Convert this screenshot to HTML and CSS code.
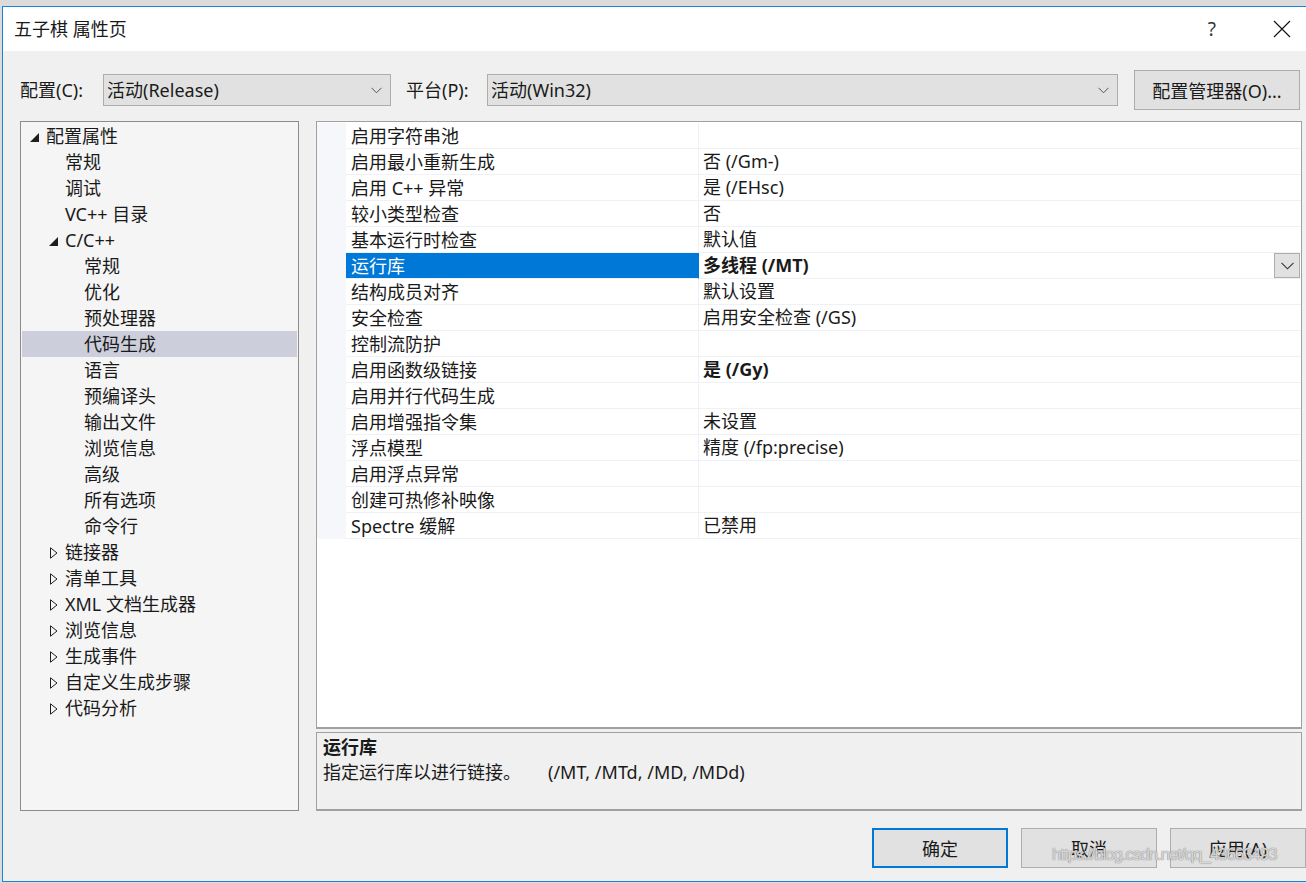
FILE: index.html
```html
<!DOCTYPE html>
<html>
<head>
  <meta charset="utf-8">
  <title>五子棋 属性页</title>
  <link rel="stylesheet" href="styles.css">
</head>
<body>

  <div class="dialog">
    <div class="titlebar">
      <span class="title">五子棋 属性页</span>
      <div class="title-buttons">
        <span class="help">?</span>
        <svg class="close" width="18" height="18" viewBox="0 0 18 18"><path d="M1 1 L17 17 M17 1 L1 17" stroke="#111" stroke-width="1.1" fill="none"/></svg>
      </div>
    </div>

    <div class="content">
      <div class="config-row">
        <span class="label label-config">配置(C):</span>
        <div class="combo combo-config">
          <span>活动(Release)</span>
          <svg width="11" height="7" viewBox="0 0 11 7"><path d="M0.5 0.8 L5.5 5.8 L10.5 0.8" stroke="#555" stroke-width="1" fill="none"/></svg>
        </div>
        <span class="label label-platform">平台(P):</span>
        <div class="combo combo-platform">
          <span>活动(Win32)</span>
          <svg width="11" height="7" viewBox="0 0 11 7"><path d="M0.5 0.8 L5.5 5.8 L10.5 0.8" stroke="#555" stroke-width="1" fill="none"/></svg>
        </div>
        <button class="btn btn-manager">配置管理器(O)...</button>
      </div>

      <div class="main">
        <div class="tree">
          <div class="node lv0"><span class="twisty"><svg width="9" height="9" viewBox="0 0 9 9"><path d="M9 0 L9 9 L0 9 Z" fill="#1e1e1e"/></svg></span>配置属性</div>
          <div class="node lv1"><span class="twisty"></span>常规</div>
          <div class="node lv1"><span class="twisty"></span>调试</div>
          <div class="node lv1"><span class="twisty"></span>VC++ 目录</div>
          <div class="node lv1"><span class="twisty"><svg width="9" height="9" viewBox="0 0 9 9"><path d="M9 0 L9 9 L0 9 Z" fill="#1e1e1e"/></svg></span>C/C++</div>
          <div class="node lv2"><span class="twisty"></span>常规</div>
          <div class="node lv2"><span class="twisty"></span>优化</div>
          <div class="node lv2"><span class="twisty"></span>预处理器</div>
          <div class="node lv2 selected"><span class="twisty"></span>代码生成</div>
          <div class="node lv2"><span class="twisty"></span>语言</div>
          <div class="node lv2"><span class="twisty"></span>预编译头</div>
          <div class="node lv2"><span class="twisty"></span>输出文件</div>
          <div class="node lv2"><span class="twisty"></span>浏览信息</div>
          <div class="node lv2"><span class="twisty"></span>高级</div>
          <div class="node lv2"><span class="twisty"></span>所有选项</div>
          <div class="node lv2"><span class="twisty"></span>命令行</div>
          <div class="node lv1"><span class="twisty closed"><svg width="8" height="12" viewBox="0 0 8 12"><path d="M0.5 0.8 L7 6 L0.5 11.2 Z" fill="none" stroke="#1e1e1e" stroke-width="1"/></svg></span>链接器</div>
          <div class="node lv1"><span class="twisty closed"><svg width="8" height="12" viewBox="0 0 8 12"><path d="M0.5 0.8 L7 6 L0.5 11.2 Z" fill="none" stroke="#1e1e1e" stroke-width="1"/></svg></span>清单工具</div>
          <div class="node lv1"><span class="twisty closed"><svg width="8" height="12" viewBox="0 0 8 12"><path d="M0.5 0.8 L7 6 L0.5 11.2 Z" fill="none" stroke="#1e1e1e" stroke-width="1"/></svg></span>XML 文档生成器</div>
          <div class="node lv1"><span class="twisty closed"><svg width="8" height="12" viewBox="0 0 8 12"><path d="M0.5 0.8 L7 6 L0.5 11.2 Z" fill="none" stroke="#1e1e1e" stroke-width="1"/></svg></span>浏览信息</div>
          <div class="node lv1"><span class="twisty closed"><svg width="8" height="12" viewBox="0 0 8 12"><path d="M0.5 0.8 L7 6 L0.5 11.2 Z" fill="none" stroke="#1e1e1e" stroke-width="1"/></svg></span>生成事件</div>
          <div class="node lv1"><span class="twisty closed"><svg width="8" height="12" viewBox="0 0 8 12"><path d="M0.5 0.8 L7 6 L0.5 11.2 Z" fill="none" stroke="#1e1e1e" stroke-width="1"/></svg></span>自定义生成步骤</div>
          <div class="node lv1"><span class="twisty closed"><svg width="8" height="12" viewBox="0 0 8 12"><path d="M0.5 0.8 L7 6 L0.5 11.2 Z" fill="none" stroke="#1e1e1e" stroke-width="1"/></svg></span>代码分析</div>
        </div>

        <div class="right">
          <div class="grid">
            <div class="row"><div class="gutter"></div><div class="name">启用字符串池</div><div class="value"></div></div>
            <div class="row"><div class="gutter"></div><div class="name">启用最小重新生成</div><div class="value">否 (/Gm-)</div></div>
            <div class="row"><div class="gutter"></div><div class="name">启用 C++ 异常</div><div class="value">是 (/EHsc)</div></div>
            <div class="row"><div class="gutter"></div><div class="name">较小类型检查</div><div class="value">否</div></div>
            <div class="row"><div class="gutter"></div><div class="name">基本运行时检查</div><div class="value">默认值</div></div>
            <div class="row active">
              <div class="gutter"></div>
              <div class="name">运行库</div>
              <div class="value">
                <b>多线程 (/MT)</b>
                <span class="drop">
                  <svg width="13" height="8" viewBox="0 0 13 8"><path d="M0.5 0.8 L6.5 6.8 L12.5 0.8" stroke="#333" stroke-width="1.1" fill="none"/></svg>
                </span>
              </div>
            </div>
            <div class="row"><div class="gutter"></div><div class="name">结构成员对齐</div><div class="value">默认设置</div></div>
            <div class="row"><div class="gutter"></div><div class="name">安全检查</div><div class="value">启用安全检查 (/GS)</div></div>
            <div class="row"><div class="gutter"></div><div class="name">控制流防护</div><div class="value"></div></div>
            <div class="row"><div class="gutter"></div><div class="name">启用函数级链接</div><div class="value"><b>是 (/Gy)</b></div></div>
            <div class="row"><div class="gutter"></div><div class="name">启用并行代码生成</div><div class="value"></div></div>
            <div class="row"><div class="gutter"></div><div class="name">启用增强指令集</div><div class="value">未设置</div></div>
            <div class="row"><div class="gutter"></div><div class="name">浮点模型</div><div class="value">精度 (/fp:precise)</div></div>
            <div class="row"><div class="gutter"></div><div class="name">启用浮点异常</div><div class="value"></div></div>
            <div class="row"><div class="gutter"></div><div class="name">创建可热修补映像</div><div class="value"></div></div>
            <div class="row"><div class="gutter"></div><div class="name">Spectre 缓解</div><div class="value">已禁用</div></div>
          </div>

          <div class="desc">
            <div class="desc-title">运行库</div>
            <div class="desc-text">指定运行库以进行链接。<span class="desc-flags">(/MT, /MTd, /MD, /MDd)</span></div>
          </div>
        </div>
      </div>

      <div class="footer">
        <button class="btn btn-ok">确定</button>
        <button class="btn">取消</button>
        <button class="btn">应用(A)</button>
        <span class="watermark">https://blog.csdn.net/qq_43663493</span>
      </div>
    </div>
  </div>

</body>
</html>
```

FILE: styles.css
```css
body {
  margin: 0;
  background-color: #dcdcdc; /* window behind the dialog */
  font-family: "Noto Sans", "Noto Sans CJK SC", sans-serif;
  font-size: 18px;
  color: #1a1a1a;
  overflow: hidden;
}

.dialog {
  margin: 6px 0 0 2px;
  width: 1306px;
  border: 1px solid #1883d7;
  background-color: #f0f0f0;
}

/* title bar */
.titlebar {
  height: 44px;
  background-color: #fff;
  display: flex;
  align-items: center;
  justify-content: space-between;
  padding-left: 11px;
}

.title {
  line-height: 26px;
}

.title-buttons {
  display: flex;
  align-items: center;
  margin-right: 18px;
}

.help {
  color: #333;
  font-size: 19px;
  margin-right: 57px;
}

.close {
  display: block;
}

/* configuration row */
.content {
  padding: 19px 0 13px 17px;
}

.config-row {
  display: flex;
  align-items: center;
  height: 40px;
}

.label {
  line-height: 26px;
}

.label-config {
  width: 83px;
}

.label-platform {
  width: 81px;
  margin-left: 15px;
}

.combo {
  box-sizing: border-box;
  height: 32px;
  background-color: #e1e1e1;
  border: 1px solid #adadad;
  display: flex;
  align-items: center;
  justify-content: space-between;
  padding: 0 8px 0 3px;
  line-height: 26px;
}

.combo-config {
  width: 288px;
}

.combo-platform {
  width: 631px;
}

.btn {
  box-sizing: border-box;
  height: 40px;
  width: 136px;
  background-color: #e1e1e1;
  border: 1px solid #adadad;
  font-family: inherit;
  font-size: 18px;
  color: #1a1a1a;
  padding: 0;
}

.btn-manager {
  width: 166px;
  margin-left: 16px;
}

/* tree and property grid */
.main {
  display: flex;
  margin-top: 11px;
  height: 690px;
}

.tree {
  box-sizing: border-box;
  width: 279px;
  border: 1px solid #8c8c8c;
  background-color: #f5f5f5;
  padding-top: 1px;
}

.node {
  height: 26px;
  line-height: 28px;
  display: flex;
  align-items: center;
  margin: 0 1px;
  white-space: nowrap;
}

.lv0 { padding-left: 4px; }
.lv1 { padding-left: 23px; }
.lv2 { padding-left: 42px; }

.node.selected {
  background-color: #cccedb;
}

.twisty {
  width: 20px;
  height: 26px;
  display: flex;
  align-items: center;
  padding-left: 4px;
  box-sizing: border-box;
}

.twisty svg {
  margin-top: 3px;
}

.twisty.closed {
  padding-left: 5px;
}

.twisty.closed svg {
  margin-top: 1px;
}

.right {
  width: 986px;
  margin-left: 17px;
  display: flex;
  flex-direction: column;
}

.grid {
  box-sizing: border-box;
  height: 608px;
  border: 1px solid #a0a0a0;
  border-bottom-width: 2px;
  background-color: #fff;
  padding-top: 1px;
}

.row {
  display: flex;
  height: 26px;
  line-height: 27px;
}

.gutter {
  width: 29px;
  background-color: #f5f7fb;
}

.name {
  box-sizing: border-box;
  width: 353px;
  padding-left: 5px;
  border-bottom: 1px solid #eef1f6;
  border-right: 1px solid #eef1f6;
  white-space: nowrap;
}

.value {
  box-sizing: border-box;
  flex: 1;
  padding-left: 4px;
  border-bottom: 1px solid #eef1f6;
  display: flex;
  align-items: center;
  justify-content: space-between;
  white-space: nowrap;
}

.value b {
  font-weight: 700;
}

.row.active .name {
  background-color: #0078d7;
  color: #fff;
  border-right-color: #0078d7;
}

.drop {
  box-sizing: border-box;
  width: 26px;
  height: 25px;
  margin-right: 1px;
  background-color: #e1e1e1;
  border: 1px solid #adadad;
  display: flex;
  align-items: center;
  justify-content: center;
}

.desc {
  box-sizing: border-box;
  height: 79px;
  margin-top: 3px;
  border: 1px solid #a0a0a0;
  border-bottom-width: 2px;
  padding: 2px 0 0 6px;
  line-height: 25px;
}

.desc-title {
  font-weight: 700;
}

.desc-flags {
  margin-left: 27px;
}

/* bottom buttons */
.footer {
  position: relative;
  display: flex;
  gap: 13px;
  margin-top: 17px;
  padding-left: 852px;
}

.btn-ok {
  border: 2px solid #0078d7;
}

.watermark {
  position: absolute;
  left: 1032px;
  top: 17px;
  font-family: "Liberation Sans", Arial, sans-serif;
  font-size: 17px;
  letter-spacing: -1.1px;
  color: rgba(255, 255, 255, 0.7);
  text-shadow: 0 0 1px #777, 0 0 1px #999;
  white-space: nowrap;
}
```
